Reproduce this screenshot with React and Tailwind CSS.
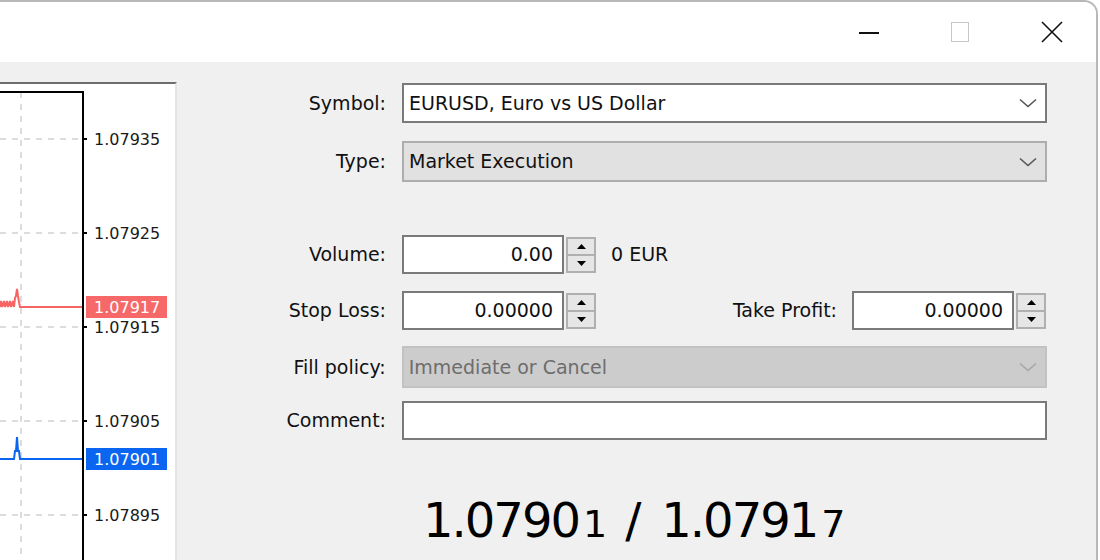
import React from "react";

const font = { fontFamily: "'DejaVu Sans', Verdana, sans-serif" };

function Chevron({ color = "#555" }) {
  return (
    <svg width="18" height="10" viewBox="0 0 18 10" className="shrink-0">
      <polyline points="1,1.5 9,8.5 17,1.5" fill="none" stroke={color} strokeWidth="1.6" />
    </svg>
  );
}

function Spinner() {
  return (
    <div className="ml-[2px] w-[30px] h-[36px] border-2 border-[#b0b0b0] bg-[#e6e6e6] flex flex-col">
      <div className="flex-1 flex items-center justify-center border-b-2 border-[#b0b0b0]">
        <svg width="9" height="5" viewBox="0 0 9 5">
          <polygon points="0,5 9,5 4.5,0" fill="#000" />
        </svg>
      </div>
      <div className="flex-1 flex items-center justify-center">
        <svg width="9" height="5" viewBox="0 0 9 5">
          <polygon points="0,0 9,0 4.5,5" fill="#000" />
        </svg>
      </div>
    </div>
  );
}

function Label({ children }) {
  return <div className="w-[225px] pr-[16px] text-right text-[19px] text-[#111]">{children}</div>;
}

function NumberBox({ value }) {
  return (
    <div className="w-[162px] h-[39px] border-2 border-[#7a7a7a] bg-white flex items-center justify-end pr-[9px] text-[19px] text-[#111]">
      {value}
    </div>
  );
}

function Chart() {
  const grid = [
    { y: 55, v: "1.07935" },
    { y: 149, v: "1.07925" },
    { y: 243, v: "1.07915" },
    { y: 337, v: "1.07905" },
    { y: 431, v: "1.07895" },
  ];
  return (
    <svg width="175" height="476" viewBox="0 0 175 476" className="block">
      <rect x="0" y="0" width="175" height="476" fill="#fff" />
      {/* grid */}
      <line x1="21" y1="8" x2="21" y2="476" stroke="#dcdcdc" strokeWidth="2" strokeDasharray="6 6" />
      {grid.map((g) => (
        <line key={g.v} x1="0" y1={g.y} x2="82" y2={g.y} stroke="#dcdcdc" strokeWidth="2" strokeDasharray="6 6" />
      ))}
      {/* frame */}
      <line x1="0" y1="8" x2="84" y2="8" stroke="#000" strokeWidth="2" />
      <line x1="83" y1="7" x2="83" y2="476" stroke="#000" strokeWidth="2" />
      {grid.map((g) => (
        <line key={"t" + g.v} x1="84" y1={g.y} x2="87" y2={g.y} stroke="#000" strokeWidth="2" />
      ))}
      {grid.map((g) => (
        <text key={"l" + g.v} x="94" y={g.y + 6} fontSize="16" fill="#1a1a1a" style={font}>
          {g.v}
        </text>
      ))}
      {/* ask line */}
      <polyline
        points="0,223 1,217 2,223 4,217 5,223 7,217 8,223 10,217 11,223 13,217 14,223 15,214 16,212 17,205 18,212 19,218 20,223 82,223"
        fill="none"
        stroke="#f76464"
        strokeWidth="2"
      />
      <rect x="86" y="212" width="81" height="22" fill="#f76868" />
      <text x="94" y="229" fontSize="16" fill="#fff" style={font}>
        1.07917
      </text>
      {/* bid line */}
      <polyline
        points="0,375 14,375 15,367 16,367 17,353 18,367 19,367 20,375 82,375"
        fill="none"
        stroke="#0a66f0"
        strokeWidth="2"
      />
      <rect x="86" y="364" width="81" height="22" fill="#0a66f0" />
      <text x="94" y="381" fontSize="16" fill="#fff" style={font}>
        1.07901
      </text>
    </svg>
  );
}

export default function App() {
  return (
    <div className="w-[1100px] h-[560px] bg-white overflow-hidden" style={font}>
      <div className="w-[1098px] h-[560px] border-t-2 border-r-2 border-[#b8b8b8] rounded-tr-[14px] overflow-hidden flex flex-col">
        {/* title bar */}
        <div className="h-[60px] bg-white flex items-center justify-end shrink-0">
          <div className="w-[92px] flex justify-center pl-[5px]">
            <div className="w-[20px] h-[2px] bg-[#111] mt-[1px]" />
          </div>
          <div className="w-[92px] flex justify-center pl-[4px]">
            <div className="w-[18px] h-[20px] border border-[#c8c8c8]" />
          </div>
          <div className="w-[92px] flex justify-center pl-[4px]">
            <svg width="22" height="22" viewBox="0 0 22 22">
              <path d="M1 1 L21 21 M21 1 L1 21" stroke="#111" strokeWidth="1.6" />
            </svg>
          </div>
        </div>

        {/* body */}
        <div className="flex-1 bg-[#f0f0f0] flex">
          <div className="w-[177px] pt-[20px] flex flex-col shrink-0">
            <div className="flex-1 border-t-2 border-[#6d6d6d] border-r-2 border-r-[#e4e4e4] bg-white overflow-hidden">
              <Chart />
            </div>
          </div>

          <div className="w-[870px] flex flex-col">
            {/* Symbol */}
            <div className="mt-[21px] flex items-center">
              <Label>Symbol:</Label>
              <div className="w-[645px] h-[40px] border-2 border-[#7a7a7a] bg-white flex items-center justify-between pl-[5px] pr-[8px] text-[19px] text-[#111]">
                <span>EURUSD, Euro vs US Dollar</span>
                <Chevron />
              </div>
            </div>

            {/* Type */}
            <div className="mt-[18px] flex items-center">
              <Label>Type:</Label>
              <div className="w-[645px] h-[41px] border-2 border-[#adadad] bg-[#e1e1e1] flex items-center justify-between pl-[5px] pr-[8px] text-[19px] text-[#111]">
                <span>Market Execution</span>
                <Chevron />
              </div>
            </div>

            {/* Volume */}
            <div className="mt-[53px] flex items-center">
              <Label>Volume:</Label>
              <NumberBox value="0.00" />
              <Spinner />
              <span className="ml-[15px] text-[19px] text-[#111]">0 EUR</span>
            </div>

            {/* Stop Loss / Take Profit */}
            <div className="mt-[17px] flex items-center">
              <Label>Stop Loss:</Label>
              <NumberBox value="0.00000" />
              <Spinner />
              <div className="flex-1" />
              <span className="text-[19px] text-[#111] mr-[15px]">Take Profit:</span>
              <NumberBox value="0.00000" />
              <Spinner />
              <div className="w-[1px]" />
            </div>

            {/* Fill policy */}
            <div className="mt-[16px] flex items-center">
              <Label>Fill policy:</Label>
              <div className="w-[646px] h-[42px] border-2 border-[#c2c2c2] bg-[#cccccc] flex items-center justify-between pl-[5px] pr-[8px] text-[19px] text-[#6d6d6d]">
                <span>Immediate or Cancel</span>
                <Chevron color="#a6a6a6" />
              </div>
            </div>

            {/* Comment */}
            <div className="mt-[13px] flex items-center">
              <Label>Comment:</Label>
              <div className="w-[645px] h-[39px] border-2 border-[#7a7a7a] bg-white" />
            </div>

            {/* Prices */}
            <div className="mt-[56px] pl-[246px] flex items-baseline text-[48px] leading-none text-black tracking-[-2px]">
              <span>1.0790</span>
              <span className="text-[38px] ml-[4px]">1</span>
              <span className="ml-[20px] mr-[22px]">/</span>
              <span>1.0791</span>
              <span className="text-[38px] ml-[4px]">7</span>
            </div>
          </div>
        </div>
      </div>
    </div>
  );
}
